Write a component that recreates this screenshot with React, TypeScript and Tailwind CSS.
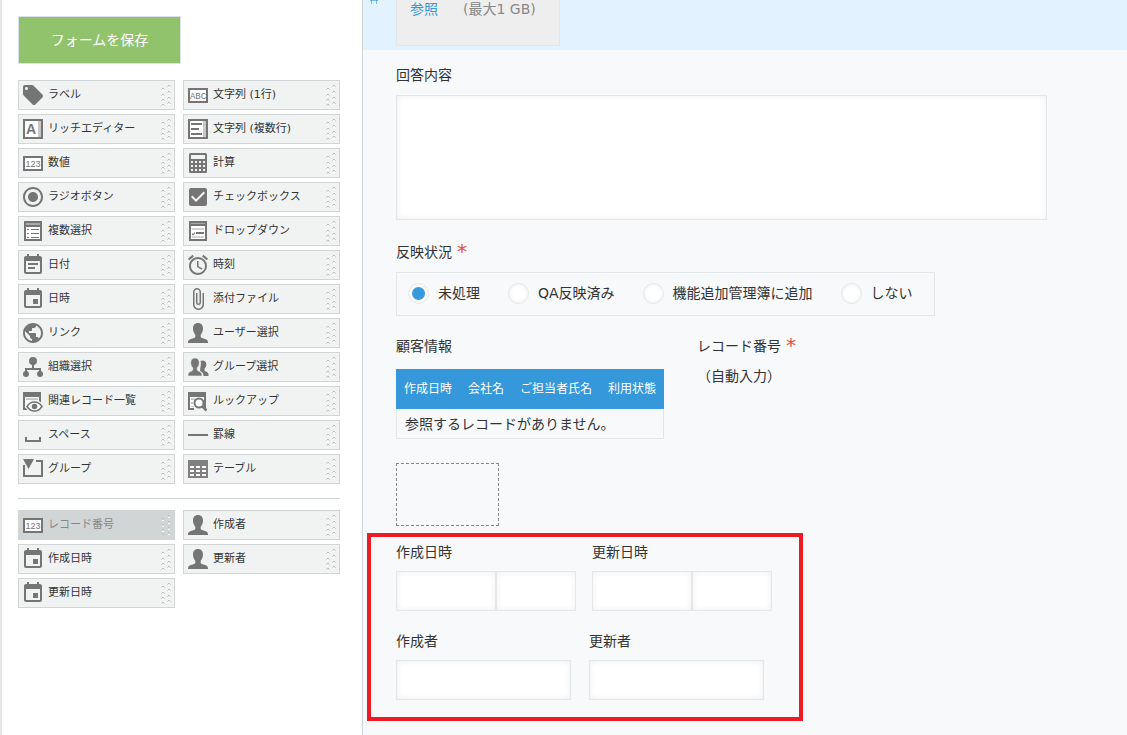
import React from "react";
import {
	MdAlarm,
	MdAttachFile,
	MdCheckBox,
	MdEvent,
	MdEventNote,
	MdLocalOffer,
	MdPublic,
	MdRadioButtonChecked,
} from "react-icons/md";

type IconProps = { children: React.ReactNode };

const Icon = ({ children }: IconProps) => (
	<svg viewBox="0 0 24 24" className="size-6" fill="#757575" aria-hidden="true">
		{children}
	</svg>
);

const AbcIcon = () => (
	<Icon>
		<rect x="3" y="6" width="18" height="13" fill="#fff" stroke="#757575" strokeWidth="2" />
		<text x="12" y="16" fontSize="9" textAnchor="middle" fontFamily="Liberation Mono">
			ABC
		</text>
	</Icon>
);

const NumberIcon = () => (
	<Icon>
		<rect x="3" y="6" width="18" height="13" fill="#fff" stroke="#757575" strokeWidth="2" />
		<text x="12" y="16" fontSize="9" textAnchor="middle" fontFamily="Liberation Sans">
			123
		</text>
	</Icon>
);

const RichIcon = () => (
	<Icon>
		<rect x="3" y="3" width="18" height="18" fill="#fff" stroke="#757575" strokeWidth="2" />
		<rect x="17" y="4" width="3" height="16" fill="#c8c8c8" />
		<text x="10" y="17" fontSize="14" fontWeight="bold" textAnchor="middle" fontFamily="Liberation Sans">
			A
		</text>
	</Icon>
);

const MultiLineIcon = () => (
	<Icon>
		<rect x="3" y="3" width="18" height="18" fill="#fff" stroke="#757575" strokeWidth="2" />
		<rect x="17" y="4" width="3" height="16" fill="#c8c8c8" />
		<path d="M5 6h11v2H5zM5 11h8v2H5zM5 16h11v2H5z" />
	</Icon>
);

const CalcIcon = () => (
	<Icon>
		<rect x="3" y="2" width="18" height="20" rx="1.5" />
		<path
			fill="#f1f3f3"
			d="M5 4h14v4H5zM5 10h2v2H5zM9 10h2v2H9zM13 10h2v2h-2zM17 10h2v2h-2zM5 14h2v2H5zM9 14h2v2H9zM13 14h2v2h-2zM17 14h2v2h-2zM5 18h2v2H5zM9 18h2v2H9zM13 18h2v2h-2zM17 18h2v2h-2z"
		/>
	</Icon>
);

const MultiSelectIcon = () => (
	<Icon>
		<rect x="4" y="3" width="16" height="18" fill="#fff" stroke="#757575" strokeWidth="2" />
		<path d="M3 2h18v6H3z" />
		<path fill="#a8a8a8" d="M5 4h14v2H5z" />
		<path d="M10 10h8v1h-8zM10 14h8v1h-8zM10 18h8v1h-8zM6 10h2v1H6zM6 14h2v1H6zM6 18h2v1H6z" />
	</Icon>
);

const DropdownIcon = () => (
	<Icon>
		<rect x="4" y="3" width="16" height="18" fill="#fff" stroke="#757575" strokeWidth="2" />
		<path d="M3 2h18v5H3z" />
		<path fill="#a8a8a8" d="M5 4h14v1H5z" />
		<path fill="#d4d4d4" d="M6 9h12v2H6zM6 17h12v2H6z" />
		<path d="M10 13h8v2h-8zM6 14l1 1 2-2v1.500l-2 2-1-1z" />
	</Icon>
);

const UserIcon = () => (
	<Icon>
		<path d="M12 2c3.200 0 5 2.200 5 5.500 0 2.800-1 4.800-2.300 6.200v1.800c0 1 1 1.500 2.500 2 3 .8 4.800 1.500 4.800 3.500v1H2v-1c0-2 1.800-2.700 4.800-3.500 1.500-.5 2.500-1 2.500-2v-1.800C8 12.300 7 10.300 7 7.500 7 4.200 8.800 2 12 2z" />
	</Icon>
);

const GroupUserIcon = () => (
	<Icon>
		<path d="M16.500 5.500c2.300 0 3.800 1.600 3.800 4 0 1.800-.7 3.200-1.800 4.200v1.500c0 1.400 4 1.400 4 4.300V21h-5c0-3-1.500-4-3.500-5l.5-4.500c.7-2 .5-4 0-5.500.5-.3 1.200-.5 2-.5z" />
		<path
			d="M9 3c2.600 0 4.300 1.900 4.300 4.700 0 2.200-.8 3.900-2.100 5v2c0 1.700 4.800 1.500 4.800 5V21H2v-1.300c0-3.500 4.800-3.300 4.800-5v-2c-1.300-1.100-2.100-2.800-2.100-5C4.700 4.900 6.400 3 9 3z"
			stroke="#f1f3f3"
			strokeWidth=".6"
		/>
	</Icon>
);

const OrgIcon = () => (
	<Icon>
		<circle cx="12" cy="6" r="4" />
		<path fill="none" stroke="#757575" strokeWidth="2" d="M12 9v5M5 18v-4h14v4" />
		<circle cx="5" cy="19" r="3" />
		<circle cx="19" cy="19" r="3" />
	</Icon>
);

const RelatedIcon = () => (
	<Icon>
		<path d="M2 3h18v18H2z" />
		<path fill="#fff" d="M4 8h14v11H4z" />
		<path fill="#c8c8c8" d="M5 9h12v2H5z" />
		<path fill="#fff" stroke="#f1f3f3" strokeWidth="4" d="M6 17.500c4-6 11-6 15 0-4 6-11 6-15 0z" />
		<path fill="#fff" stroke="#757575" strokeWidth="1.500" d="M6 17.500c4-6 11-6 15 0-4 6-11 6-15 0z" />
		<circle cx="13.500" cy="17.500" r="2.800" />
	</Icon>
);

const LookupIcon = () => (
	<Icon>
		<path d="M2 3h18v16h-2V8H4v11h4v2H2z" />
		<path fill="#fff" d="M4 8h14v11H4z" />
		<path fill="#c8c8c8" d="M5 9h4v2H5zM5 13h2v2H5zM5 17h3v1H5z" />
		<circle cx="13" cy="14" r="4.500" fill="#fff" stroke="#757575" strokeWidth="2" />
		<path stroke="#757575" strokeWidth="2.500" d="M16.500 17.500l4 4" />
	</Icon>
);

const SpaceIcon = () => (
	<Icon>
		<path d="M4 14h2v3h12v-3h2v5H4z" />
	</Icon>
);

const RuleIcon = () => (
	<Icon>
		<path d="M2 11h20v2H2z" />
	</Icon>
);

const GroupIcon = () => (
	<Icon>
		<path d="M2 8h2v10h16V5h-5V3h7v17H2z" />
		<path d="M2 2h11l-5.500 10z" />
	</Icon>
);

const TableIcon = () => (
	<Icon>
		<path d="M2 3h20v18H2z" fill="#808080" />
		<path
			fill="#fff"
			d="M4 9h4v2H4zM10 9h4v2h-4zM16 9h4v2h-4zM4 13h4v2H4zM10 13h4v2h-4zM16 13h4v2h-4zM4 17h4v2H4zM10 17h4v2h-4zM16 17h4v2h-4z"
		/>
	</Icon>
);

const Grip = () => (
	<svg viewBox="0 0 12 22" className="ml-auto h-[22px] w-3" aria-hidden="true">
		<path
			fill="#bcbfbf"
			d="M2 4h2v1H2zM2 10h2v1H2zM2 15h2v1H2zM2 20h2v1H2zM8 1h2v1H8zM8 7h2v1H8zM8 13h2v1H8zM8 18h2v1H8z"
		/>
		<path
			fill="#d0d3d3"
			d="M1 5h1v1H1zM4 5h1v1H4zM1 11h1v1H1zM4 11h1v1H4zM1 16h1v1H1zM4 16h1v1H4zM1 21h1v1H1zM4 21h1v1H4zM7 2h1v1H7zM10 2h1v1h-1zM7 8h1v1H7zM10 8h1v1h-1zM7 14h1v1H7zM10 14h1v1h-1zM7 19h1v1H7zM10 19h1v1h-1z"
		/>
		<path
			fill="#fff"
			d="M2 6h2v1H2zM2 12h2v1H2zM2 17h2v1H2zM8 3h2v1H8zM8 9h2v1H8zM8 15h2v1H8zM8 20h2v1H8z"
		/>
	</svg>
);

type Item = { label: string; icon: React.ReactNode; disabled?: boolean };

const fields: Item[] = [
	{ label: "ラベル", icon: <MdLocalOffer size={24} /> },
	{ label: "文字列 (1行)", icon: <AbcIcon /> },
	{ label: "リッチエディター", icon: <RichIcon /> },
	{ label: "文字列 (複数行)", icon: <MultiLineIcon /> },
	{ label: "数値", icon: <NumberIcon /> },
	{ label: "計算", icon: <CalcIcon /> },
	{ label: "ラジオボタン", icon: <MdRadioButtonChecked size={24} /> },
	{ label: "チェックボックス", icon: <MdCheckBox size={24} /> },
	{ label: "複数選択", icon: <MultiSelectIcon /> },
	{ label: "ドロップダウン", icon: <DropdownIcon /> },
	{ label: "日付", icon: <MdEventNote size={24} /> },
	{ label: "時刻", icon: <MdAlarm size={24} /> },
	{ label: "日時", icon: <MdEvent size={24} /> },
	{ label: "添付ファイル", icon: <MdAttachFile size={24} /> },
	{ label: "リンク", icon: <MdPublic size={24} /> },
	{ label: "ユーザー選択", icon: <UserIcon /> },
	{ label: "組織選択", icon: <OrgIcon /> },
	{ label: "グループ選択", icon: <GroupUserIcon /> },
	{ label: "関連レコード一覧", icon: <RelatedIcon /> },
	{ label: "ルックアップ", icon: <LookupIcon /> },
	{ label: "スペース", icon: <SpaceIcon /> },
	{ label: "罫線", icon: <RuleIcon /> },
	{ label: "グループ", icon: <GroupIcon /> },
	{ label: "テーブル", icon: <TableIcon /> },
];

const systemFields: Item[] = [
	{ label: "レコード番号", icon: <NumberIcon />, disabled: true },
	{ label: "作成者", icon: <UserIcon /> },
	{ label: "作成日時", icon: <MdEvent size={24} /> },
	{ label: "更新者", icon: <UserIcon /> },
	{ label: "更新日時", icon: <MdEvent size={24} /> },
];

const Palette = ({ items }: { items: Item[] }) => (
	<ul className="grid grid-cols-2 gap-x-2 gap-y-1">
		{items.map((item) => (
			<li key={item.label}>
				<button
					type="button"
					disabled={item.disabled}
					className="flex h-[30px] w-full items-center border border-[#d1d5d5] bg-[#f1f3f3] px-[2px] text-[11px] text-[#333] disabled:bg-[#d1d5d6] disabled:text-[#888]"
				>
					<span className="mr-[3px] text-[#757575]">{item.icon}</span>
					<span className="leading-4 whitespace-nowrap">{item.label}</span>
					<Grip />
				</button>
			</li>
		))}
	</ul>
);

const inputClass =
	"border border-[#e3e7e8] bg-white shadow-[inset_0_0_6px_#eeeeee] outline-none";

const Required = () => <span className="ml-[5px] text-xl leading-[18px] text-[#e74c3c]">*</span>;

const options = ["未処理", "QA反映済み", "機能追加管理簿に追加", "しない"];

const DateTime = ({ id, label }: { id: string; label: string }) => (
	<div className="flex flex-col gap-[9px]">
		<label htmlFor={id} className="leading-5">
			{label}
		</label>
		<div className="flex">
			<input id={id} type="text" className={`h-10 w-[100px] ${inputClass}`} />
			<input type="text" aria-label={`${label} 時刻`} className={`h-10 w-20 ${inputClass}`} />
		</div>
	</div>
);

const UserField = ({ id, label }: { id: string; label: string }) => (
	<div className="flex flex-col gap-[9px]">
		<label htmlFor={id} className="leading-5">
			{label}
		</label>
		<input id={id} type="text" className={`h-10 w-[175px] ${inputClass}`} />
	</div>
);

const Sidebar = () => (
	<aside className="w-[363px] shrink-0 border-r border-l-2 border-r-[#d1d5d8] border-l-[#e5e5e5] bg-white pt-4 pr-[22px] pl-4">
		<button
			type="button"
			className="mb-4 block h-12 w-[163px] border border-[#dce3e8] bg-[#91c36c] text-sm text-white"
		>
			フォームを保存
		</button>
		<Palette items={fields} />
		<hr className="mt-[14px] mb-[11px] border-[#d1d5d5]" />
		<Palette items={systemFields} />
	</aside>
);

const App = () => {
	return (
		<div className="flex min-h-screen font-['DejaVu_Sans','Noto_Sans_CJK_JP',sans-serif] text-sm text-[#333]">
			<Sidebar />
			<main className="min-w-0 flex-1 bg-[#f7f9fb]">
				<div className="flex h-[50px] bg-[#e2f2fe]">
					<svg viewBox="0 0 8 4" className="mr-[18px] ml-[7px] h-1 w-2" stroke="#3498db" aria-hidden="true">
						<path d="M1.500 0v4M6.500 0v4M0 .5h8" strokeOpacity=".6" />
					</svg>
					<div className="flex h-[46px] w-[164px] gap-[25px] border border-t-0 border-[#e3e7e8] bg-[#eee] pl-[13px] leading-[18px] whitespace-nowrap text-[#888]">
						<a href="#" className="text-[#3498db]">
							参照
						</a>
						<span>(最大1 GB)</span>
					</div>
				</div>

				<div className="px-[33px] pt-[15px] pb-[14px]">
					<label htmlFor="answer" className="block leading-5">
						回答内容
					</label>
					<textarea
						id="answer"
						className={`mt-[10px] block h-[125px] w-full max-w-[651px] resize-none ${inputClass}`}
					/>

					<fieldset className="mt-[22px]">
						<legend className="flex h-5 leading-5">
							反映状況
							<Required />
						</legend>
						<div className="mt-[10px] flex h-11 w-fit items-center gap-7 border border-[#e3e7e8] pr-[21px] pb-[2px] pl-[11px]">
							{options.map((option, i) => (
								<label key={option} className="flex items-center gap-[9px] whitespace-nowrap">
									<input
										type="radio"
										name="status"
										defaultChecked={i === 0}
										className="size-[21px] appearance-none rounded-full border border-[#e3e7e8] bg-white shadow-[inset_0_0_4px_#eeeeee] checked:bg-[radial-gradient(circle,#3498db_6px,#fff_7px)]"
									/>
									{option}
								</label>
							))}
						</div>
					</fieldset>

					<div className="mt-5 flex gap-[33px]">
						<div>
							<p className="leading-5">顧客情報</p>
							<table className="mt-[13px] border-separate border-spacing-0 text-left whitespace-nowrap">
								<thead>
									<tr className="h-10 bg-[#3498db] text-xs text-white">
										<th className="px-2 font-normal">作成日時</th>
										<th className="px-2 font-normal">会社名</th>
										<th className="px-2 font-normal">ご担当者氏名</th>
										<th className="px-2 font-normal">利用状態</th>
									</tr>
								</thead>
								<tbody>
									<tr className="h-[30px]">
										<td colSpan={4} className="border border-t-0 border-[#e3e7e8] px-2">
											参照するレコードがありません。
										</td>
									</tr>
								</tbody>
							</table>
						</div>
						<div>
							<p className="flex h-5 leading-5">
								レコード番号
								<Required />
							</p>
							<p className="mt-[10px] leading-5">（自動入力）</p>
						</div>
					</div>

					<div className="mt-6 h-[63px] w-[103px] border border-dashed border-[#888]" />

					<section className="mt-[7px] -ml-[29px] flex w-[436px] flex-col gap-5 border-4 border-[#ed1c24] pt-[5px] pb-[17px] pl-[25px]">
						<div className="flex gap-4">
							<DateTime id="created-at" label="作成日時" />
							<DateTime id="updated-at" label="更新日時" />
						</div>
						<div className="flex gap-[18px]">
							<UserField id="created-by" label="作成者" />
							<UserField id="updated-by" label="更新者" />
						</div>
					</section>
				</div>
			</main>
		</div>
	);
};

export default App;
